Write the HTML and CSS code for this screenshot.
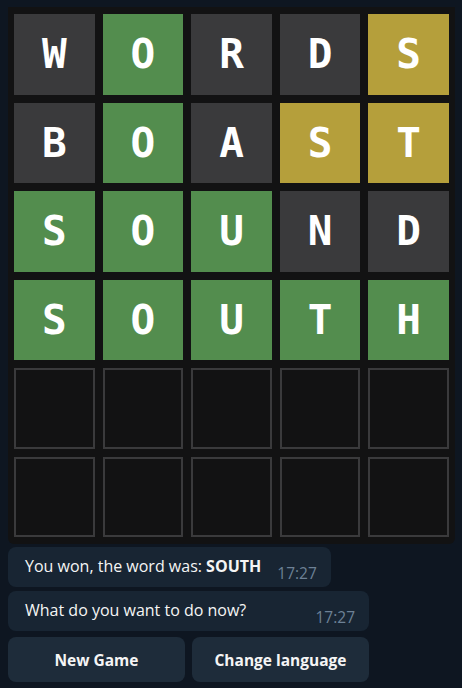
FILE: index.html
```html
<!DOCTYPE html>
<html>
<head>
<meta charset="utf-8">
<link rel="stylesheet" href="styles.css">
</head>
<body>
<div class="chat">
  <div class="board">
    <div class="tile absent">W</div><div class="tile correct">O</div><div class="tile absent">R</div><div class="tile absent">D</div><div class="tile present">S</div>
    <div class="tile absent">B</div><div class="tile correct">O</div><div class="tile absent">A</div><div class="tile present">S</div><div class="tile present">T</div>
    <div class="tile correct">S</div><div class="tile correct">O</div><div class="tile correct">U</div><div class="tile absent">N</div><div class="tile absent">D</div>
    <div class="tile correct">S</div><div class="tile correct">O</div><div class="tile correct">U</div><div class="tile correct">T</div><div class="tile correct">H</div>
    <div class="tile empty"></div><div class="tile empty"></div><div class="tile empty"></div><div class="tile empty"></div><div class="tile empty"></div>
    <div class="tile empty"></div><div class="tile empty"></div><div class="tile empty"></div><div class="tile empty"></div><div class="tile empty"></div>
  </div>
  <div class="bubble first">
    <span class="text">You won, the word was: <b>SOUTH</b></span>
    <span class="time">17:27</span>
  </div>
  <div class="group">
    <div class="bubble second">
      <span class="text">What do you want to do now?</span>
      <span class="time">17:27</span>
    </div>
    <div class="keyboard">
      <div class="key">New Game</div>
      <div class="key">Change language</div>
    </div>
  </div>
</div>
</body>
</html>
```
FILE: styles.css
```css
html, body {
  margin: 0;
  background: #0e1621;
}
body {
  padding: 7px 7px 0 8px;
  font-family: "Open Sans", "Noto Sans", sans-serif;
  color: #f5f5f5;
}
.chat {
  display: flex;
  flex-direction: column;
  align-items: flex-start;
}
.board {
  box-sizing: border-box;
  width: 447px;
  height: 537px;
  padding: 7px 6px 7px 6px;
  background: #121213;
  border-radius: 0 0 6px 6px;
  display: grid;
  grid-template-columns: repeat(5, 1fr);
  grid-template-rows: repeat(6, 1fr);
  gap: 8px;
}
.tile {
  box-sizing: border-box;
  display: flex;
  align-items: center;
  justify-content: center;
  font-family: "DejaVu Sans Mono", monospace;
  font-weight: bold;
  font-size: 41px;
  color: #ffffff;
}
.absent { background: #3a3a3c; }
.correct { background: #538d4e; }
.present { background: #b59f3b; }
.empty {
  background: #121213;
  border: 2px solid #3a3a3c;
}
.bubble {
  box-sizing: border-box;
  display: flex;
  align-items: flex-end;
  background: #182533;
  border-radius: 8px;
  padding: 9px 14px 5px 17px;
  font-size: 16px;
  line-height: 21px;
}
.bubble.first {
  margin-top: 3px;
}
.text {
  padding-bottom: 5px;
}
.text b { font-weight: 700; }
.time {
  margin-left: auto;
  padding-left: 16px;
  font-size: 15.5px;
  line-height: 18px;
  color: #6d8196;
}
.group {
  margin-top: 4px;
  display: flex;
  flex-direction: column;
  gap: 6px;
}
.keyboard {
  display: grid;
  grid-template-columns: 177px 177px;
  gap: 7px;
}
.key {
  height: 45px;
  display: flex;
  align-items: center;
  justify-content: center;
  background: #1e2c3a;
  border-radius: 8px;
  font-weight: 700;
  font-size: 15.5px;
  color: #f5f5f5;
}
```
